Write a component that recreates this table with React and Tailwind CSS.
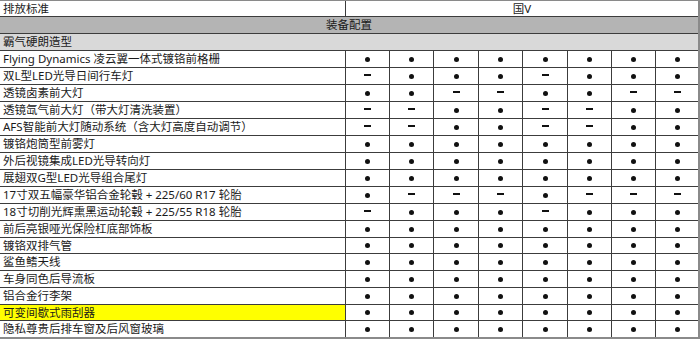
const colW = ["w-[44px]", "w-[44px]", "w-[45px]", "w-[44px]", "w-[45px]", "w-[44px]", "w-[44px]", "w-[42px]"];

const A = "11111111";

// 1 = standard (dot), 0 = not available (dash)
const items = [
    ["Flying Dynamics 凌云翼一体式镀铬前格栅", A, "h-[17px]"],
    ["双L型LED光导日间行车灯", "01110111", "h-[17px]"],
    ["透镜卤素前大灯", "11001100", "h-[17px]"],
    ["透镜氙气前大灯（带大灯清洗装置）", "00110011", "h-[17px]"],
    ["AFS智能前大灯随动系统（含大灯高度自动调节）", "00110011", "h-[17px]"],
    ["镀铬炮筒型前雾灯", A, "h-[17px]"],
    ["外后视镜集成LED光导转向灯", A, "h-[17px]"],
    ["展翅双G型LED光导组合尾灯", A, "h-[17px]"],
    ["17寸双五幅豪华铝合金轮毂 + 225/60 R17 轮胎", "10001000", "h-[17px]"],
    ["18寸切削光辉熏黑运动轮毂 + 225/55 R18 轮胎", "01110111", "h-[17px]"],
    ["前后亮银哑光保险杠底部饰板", A, "h-[17px]"],
    ["镀铬双排气管", A, "h-[16px]"],
    ["鲨鱼鳍天线", A, "h-[17px]"],
    ["车身同色后导流板", A, "h-[17px]"],
    ["铝合金行李架", A, "h-[17px]"],
    ["可变间歇式雨刮器", A, "h-[16px]", true],
    ["隐私尊贵后排车窗及后风窗玻璃", A, "h-[16px]"],
];

const Mark = ({ on }) =>
    on ? (
        <span className="block h-[5px] w-[5px] rounded-full bg-[#111]" />
    ) : (
        <span className="mb-[3px] block h-[2px] w-[7px] bg-[#111]" />
    );

const App = () => {
    return (
        <div
            className="w-[700px] h-[339px] overflow-hidden bg-white text-[11.5px] leading-none text-[#1a1a1a]"
            style={{ fontFamily: '"Noto Sans", "Noto Sans CJK SC", sans-serif' }}
        >
            <div className="w-[700px] border-t border-r-2 border-b-2 border-t-[#8a8a8a] border-r-[#8a8a8a] border-b-[#8a8a8a]">
                {/* emission row */}
                <div className="flex h-[16px] border-b border-[#3c3c3c]">
                    <div className="flex w-[346px] items-center border-r border-[#3c3c3c] pl-[3px]">排放标准</div>
                    <div className="flex flex-1 items-center justify-center">国V</div>
                </div>
                {/* section header */}
                <div className="flex h-[17px] items-center justify-center border-b border-[#3c3c3c] bg-[#b4b4b4]">
                    装备配置
                </div>
                <div className="flex h-[17px] items-center border-b border-[#3c3c3c] bg-[#d9d9d9] pl-[3px]">
                    霸气硬朗造型
                </div>
                {items.map(([label, marks, h, hl], i) => (
                    <div
                        key={label}
                        className={`flex ${h} ${i === items.length - 1 ? "" : "border-b border-[#3c3c3c]"}`}
                    >
                        <div
                            className={`flex w-[346px] items-center border-r border-[#3c3c3c] pl-[3px] whitespace-pre ${
                                hl ? "bg-[#ffff00]" : ""
                            }`}
                        >
                            {label}
                        </div>
                        {colW.map((w, j) => (
                            <div
                                key={j}
                                className={`flex ${w} items-center justify-center ${
                                    j === colW.length - 1 ? "" : "border-r border-[#3c3c3c]"
                                }`}
                            >
                                <Mark on={marks[j] === "1"} />
                            </div>
                        ))}
                    </div>
                ))}
            </div>
        </div>
    );
};

export default App;
